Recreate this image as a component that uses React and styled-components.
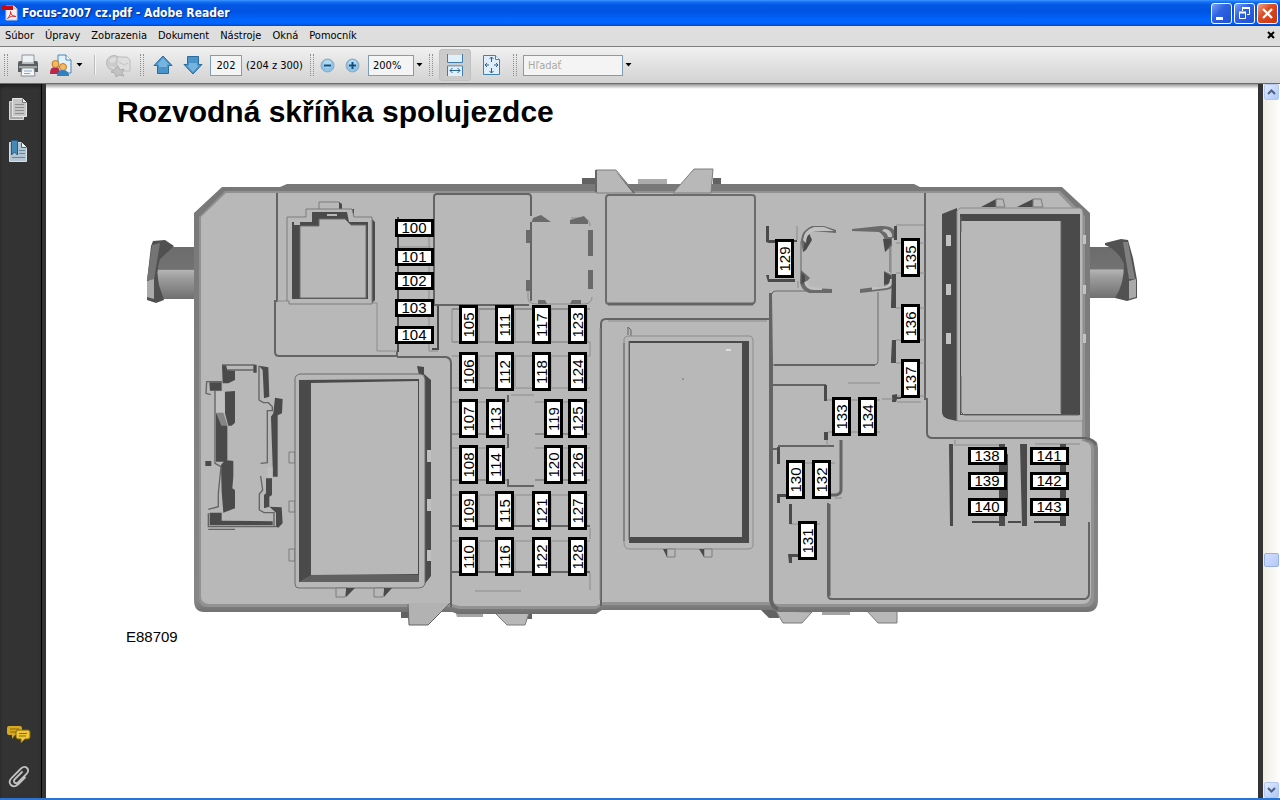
import { useState } from "react";
import styled, { createGlobalStyle, css } from "styled-components";

const menu = ["Súbor", "Úpravy", "Zobrazenia", "Dokument", "Nástroje", "Okná", "Pomocník"];

// x, y of the top left corner of each fuse on the board
const horizontalFuses = [
    [100, 395, 219], [101, 395, 248], [102, 395, 272], [103, 395, 299], [104, 395, 326],
    [138, 968, 447], [139, 968, 472], [140, 968, 498],
    [141, 1030, 447], [142, 1030, 472], [143, 1030, 498],
];

const verticalFuses = [
    [105, 459, 305], [106, 459, 352], [107, 459, 399], [108, 459, 445], [109, 459, 491], [110, 459, 537],
    [111, 495, 305], [112, 495, 352], [113, 486, 399], [114, 486, 445], [115, 495, 491], [116, 495, 537],
    [117, 532, 305], [118, 532, 352], [119, 544, 399], [120, 544, 445], [121, 532, 491], [122, 532, 537],
    [123, 568, 305], [124, 568, 352], [125, 568, 399], [126, 568, 445], [127, 568, 491], [128, 568, 537],
    [129, 775, 239], [130, 786, 460], [131, 798, 521], [132, 812, 460], [133, 832, 397], [134, 858, 397],
    [135, 901, 238], [136, 901, 304], [137, 901, 359],
];

export default function App() {
    const [page, setPage] = useState("202");
    const [search, setSearch] = useState("");

    return (
        <>
            <GlobalStyle />
            <Window>
                <TitleBar>
                    <AppIcon />
                    <Title>Focus-2007 cz.pdf - Adobe Reader</Title>
                    <WindowButton aria-label="Minimalizovať">
                        <svg width="19" height="19"><path d="M4 13h7v3H4z" fill="#fff" /></svg>
                    </WindowButton>
                    <WindowButton aria-label="Obnoviť">
                        <svg width="19" height="19" fill="none" stroke="#fff">
                            <path d="M7.5 7V4.5h7v6H12" /><path d="M7 4h8" strokeWidth="2" />
                            <path d="M4.5 8.5h6v6h-6z" /><path d="M4 8.5h7" strokeWidth="2" />
                        </svg>
                    </WindowButton>
                    <WindowButton $close aria-label="Zavrieť">
                        <svg width="19" height="19"><path d="M5 5l9 9M14 5l-9 9" stroke="#fff" strokeWidth="2.3" /></svg>
                    </WindowButton>
                </TitleBar>
                <MenuBar>
                    {menu.map((item) => <MenuItem key={item}>{item}</MenuItem>)}
                    <CloseDocument aria-label="Zavrieť dokument">
                        <svg width="8" height="8"><path d="M1 1l6 6M7 1L1 7" stroke="#000" strokeWidth="2" /></svg>
                    </CloseDocument>
                </MenuBar>
                <ToolBar>
                    <Grip />
                    <ToolButton $width={28} aria-label="Tlačiť"><PrintIcon /></ToolButton>
                    <ToolButton $width={40} aria-label="Spolupracovať"><ShareIcon /><Caret /></ToolButton>
                    <Divider />
                    <ToolButton $width={32} aria-label="Odoslať" disabled><SendIcon /></ToolButton>
                    <Grip />
                    <ToolButton $width={26} aria-label="Predchádzajúca strana"><ArrowIcon /></ToolButton>
                    <ToolButton $width={26} aria-label="Nasledujúca strana"><ArrowIcon down /></ToolButton>
                    <Field $width={32} $center aria-label="Strana" value={page} onChange={(e) => setPage(e.target.value)} />
                    <PageCount>(204 z 300)</PageCount>
                    <Grip />
                    <ZoomButtons>
                        <ToolButton $width={15} aria-label="Zmenšiť"><ZoomIcon /></ToolButton>
                        <ToolButton $width={15} aria-label="Zväčšiť"><ZoomIcon plus /></ToolButton>
                    </ZoomButtons>
                    <Combo>
                        <ZoomSelect aria-label="Zväčšenie" defaultValue="200%">
                            <option>100%</option>
                            <option>200%</option>
                        </ZoomSelect>
                        <Caret />
                    </Combo>
                    <Grip />
                    <ToolButton $width={32} $active aria-label="Na šírku"><FitWidthIcon /></ToolButton>
                    <ToolButton $width={32} aria-label="Celá strana"><FitPageIcon /></ToolButton>
                    <Grip />
                    <Combo>
                        <Field $width={100} aria-label="Hľadať" placeholder="Hľadať" value={search} onChange={(e) => setSearch(e.target.value)} />
                        <ToolButton $width={7} aria-label="Možnosti hľadania"><Caret /></ToolButton>
                    </Combo>
                </ToolBar>
                <Workspace>
                    <SideBar>
                        <SideButton aria-label="Strany"><PagesIcon /></SideButton>
                        <SideButton aria-label="Záložky"><BookmarkIcon /></SideButton>
                        <Spacer $grow={1} />
                        <SideButton aria-label="Komentáre"><CommentsIcon /></SideButton>
                        <SideButton aria-label="Prílohy"><ClipIcon /></SideButton>
                    </SideBar>
                    <Sheet>
                        <Heading>Rozvodná skříňka spolujezdce</Heading>
                        <Figure>
                            <FuseBox />
                            <Caption>E88709</Caption>
                        </Figure>
                    </Sheet>
                    <ScrollBar>
                        <ScrollButton aria-label="Hore">
                            <svg width="9" height="6"><path d="M1 5l3.5-3.5L8 5" stroke="#4d6185" strokeWidth="2" fill="none" /></svg>
                        </ScrollButton>
                        <Spacer $grow={455} />
                        <Thumb />
                        <Spacer $grow={216} />
                        <ScrollButton aria-label="Dole">
                            <svg width="9" height="6"><path d="M1 1l3.5 3.5L8 1" stroke="#4d6185" strokeWidth="2" fill="none" /></svg>
                        </ScrollButton>
                    </ScrollBar>
                </Workspace>
            </Window>
        </>
    );
}

function FuseBox() {
    return (
        <Board viewBox="146 168 992 460" role="img" aria-label="Rozvodná skříňka">
            <defs>
                <linearGradient id="neck" x1="0" y1="0" x2="0" y2="1">
                    <stop offset="0" stopColor="#6c6c6c" />
                    <stop offset="0.43" stopColor="#727272" />
                    <stop offset="0.45" stopColor="#b4b4b4" />
                    <stop offset="0.6" stopColor="#9c9c9c" />
                    <stop offset="1" stopColor="#707070" />
                </linearGradient>
                <linearGradient id="rim" x1="0" y1="0" x2="0" y2="1">
                    <stop offset="0" stopColor="#787878" />
                    <stop offset="0.97" stopColor="#868686" />
                    <stop offset="1" stopColor="#6e6e6e" />
                </linearGradient>
            </defs>

            {/* mounting ears */}
            <path d="M158 247h37v52h-37z" fill="url(#neck)" />
            <path d="M153 241L165 240L174 246L160 259Q156 270 159 285L164 300L156 303L147 300V281L151 246Z" fill="#505050" />
            <path d="M152 245L160 243L154 280H147Z" fill="#747474" />
            <path d="M147 281L154 279V299L147 297Z" fill="#aaa" />
            <path d="M1088 247h37v51h-37z" fill="url(#neck)" />
            <path d="M1105 243L1121 239L1128 240L1133 258L1137 280V298L1127 301L1115 298Q1124 285 1124 264Q1118 250 1105 245Z" fill="#525252" />
            <path d="M1123 242L1128 242L1135 279H1129Z" fill="#808080" />
            <path d="M1129 281L1136 279V297L1129 299Z" fill="#aaa" />

            {/* case */}
            <path d="M582 178h13v8h-13zM713 178h8v8h-8z" fill="#626262" />
            <path d="M638 179h29v6h-29z" fill="#acacac" />
            <path d="M401 610h10v8h-10zM524 610h8v9h-6zM761 610h18v8h-10z" fill="#636363" />
            <path d="M455 611h28v6h-26zM822 610h28v5h-28z" fill="#a4a4a4" />
            <Tab d="M495 613L507 625H525L529 613Z" />
            <Tab d="M776 611L783 623H802L812 612Z" />
            <Tab d="M867 611L878 623H897V611Z" />
            <path d="M194 213L222 187H280L287 184H914L920 187H1062L1090 213V438Q1098 440 1098 448V600Q1098 612 1087 612H779L771 610H602L596 614H458L452 612H204Q194 612 194 600Z" fill="url(#rim)" />
            <path d="M199 217L225 191H1060L1085 216V441Q1094 442 1094 449V598Q1094 607 1085 607H776L768 605H603L596 609H459L452 607H207Q199 607 199 598Z" fill="#929292" />
            <path d="M201 217L226 193H1058L1082 218V441Q1091 442 1091 449V594Q1091 604 1082 604H776L768 602H603L596 606H459L452 604H210Q201 604 201 596Z" fill="#b8b8b8" />
            <path d="M408 603H450L428 625H409Z" fill="#b2b2b2" />
            <Edge d="M408 604L409 625H428L450 603" />
            <Tab d="M596 193V170H616L635 193Z" />
            <Tab d="M673 193L694 169H713L711 193Z" />
            <path d="M618 174L635 193H633L616 172ZM595 170h2v22h-2z" fill="#666" />

            {/* upper left */}
            <Edge d="M277 193V301H275V352Q275 356 279 356H397V351" $width={2} />
            <Edge d="M397 357H446Q451 358 451 363V607" $width={2} />
            <Edge d="M277 301H287M372 303H377V351H397" $light />
            <Tab d="M319 208V202H339L341 207V210H319Z" />
            <Dark d="M339 202L342 204V209H339ZM352 209H354V217H352ZM371 218L375 222V300L371 304Z" />
            <Tab d="M287 217H306V209H352L354 217H372V304H289V301H287Z" />
            <Dark d="M292 222H312V212H347L349 222H368V299H292Z" />
            <Plate d="M300 226H319V219H345L351 225H366V298H300Z" />
            <path d="M327 214h10v2h-10zM294 222h6v3h-6z" fill="#b8b8b8" />
            <Dark d="M397 217h2v135h-2zM437 306h2v44h-7v-2h5z" />
            <Edge d="M429 237V351H438M399 247H431M399 262H431M399 315H431" $light />

            <Edge d="M434 304V197Q434 194 437 194H528Q531 194 531 197V216" $width={2} />
            <Edge d="M433 305H529" $width={2} />
            <Edge d="M531 222V301" $width={2} />
            <Edge d="M532 222Q532 218 538 219H544M571 218H583Q590 219 590 226M528 291V298Q528 304 537 304H585Q592 303 592 297" $light />
            <Grey d="M533 218L541 215L551 222H532ZM570 220L584 216L588 221V224H570ZM526 230h5v13h-5zM526 280h5v11h-5zM588 230h5v26h-5zM588 270h5v19h-5zM538 300h7l2 4h-9zM572 300h9v4h-11z" />
            <Plate d="M606 198Q606 195 609 195H752Q755 195 755 198V300Q755 304 751 304H609Q606 304 606 301Z" $width={2} />
            <Edge d="M608 304H753" $width={3} />

            {/* fuse columns */}
            {[309, 342, 356, 388].map((y) => <Edge key={y} d={`M452 ${y}H590`} $light={y !== 309} />)}
            {[402, 434, 448, 480].map((y) => <Edge key={y} d={`M452 ${y}H507M535 ${y}H590`} $light={y === 402 || y === 448} />)}
            {[495, 526, 541, 572].map((y) => <Edge key={y} d={`M452 ${y}H590`} $light={y === 495 || y === 541} $width={y === 526 || y === 572 ? 2 : 1} />)}
            {[479, 515, 551, 587].map((x) => (
                <Edge key={x} d={`M${x} 310V341M${x} 357V387M${x} 496V525M${x} 542V571`} $light />
            ))}
            <path d="M508 395h27v91h-27z" fill="#b8b8b8" />
            <Edge d="M508 395V402M508 434V448M508 479V486H534" $width={2} />
            <Edge d="M511 395H534M452 309V342H590V356M590 528V539M590 573V590M475 591H521" $light />

            {/* middle relay */}
            <Edge d="M601 606V324Q601 319 606 319H770" $width={2} />
            <Edge d="M600 328V600M608 321H767" $light />
            <Edge d="M771 293V600Q772 607 778 609" $width={4} />
            <Edge d="M628 335V327L631 330V336" />
            <Plate d="M624 340Q624 336 629 336H749Q753 336 753 341V545Q753 549 748 549H630Q624 549 624 543Z" $light />
            <Dark d="M629 341H749V543H629Z" />
            <path d="M630 343h112v194h-112z" fill="#b8b8b8" />
            <Edge d="M624 343V541M629 341V540" />
            <path d="M726 349h5v2h-5z" fill="#ddd" />
            <circle cx="683" cy="379" r="1" fill="#888" />
            <Tab d="M667 549V557H675V549ZM704 549V557H712V549Z" />
            <Dark d="M663 549H667V557ZM699 549H704V557Z" />

            {/* socket by 129 */}
            <Dark d="M766 226h3v14h12v3h-12l-3-1zM766 275h3v4h26v3h-27zM790 240h7v2h-7z" />
            <Edge d="M797 226V240M798 281V288" $light />
            <Plate d="M772 294Q772 291 776 291H878V361Q878 365 874 365H773" />
            <Edge d="M774 365H875" $width={2} />
            <path d="M801 240V285Q803 292 810 292H882Q893 291 894 285V238Q893 226 881 226H811Q801 227 801 236Z" fill="#b8b8b8" />
            <Grey d="M801 240Q802 230 812 226L824 226L836 230V233L812 231Q806 236 808 246L803 252ZM852 231V229L880 226Q894 225 895 233V238H892V246L885 252V241Q884 235 879 232ZM801 270L810 278L806 282L812 288L832 289V293H809Q801 290 800 282ZM884 271L892 275H895V282Q894 289 886 290L860 293V289L884 286Z" />
            <Dark d="M809 233L812 240L806 250L803 252L805 240ZM883 239H891V244L885 252ZM884 272L891 276V284H884ZM801 272L805 276V283L801 284Z" />
            <path d="M803 240Q804 230 814 227H824L834 231H814Q806 234 806 243ZM884 229Q892 229 892 237H888Q887 232 882 231ZM890 279H894Q893 287 887 288L872 290V287L884 286Q890 285 890 279ZM804 282Q806 290 814 290H822V288L812 287Q808 285 808 281Z" fill="#c1c1c1" />
            <Edge d="M801 241V284M890 247V272" />

            {/* right column */}
            <Edge d="M925 193V399H927V433Q927 438 933 438H1085Q1093 439 1096 445" $width={2} />
            <Edge d="M896 225H924M896 243H925M891 247V275M896 273H925M896 308H925M896 340H925M896 363H925M897 396H925M897 402H921M848 383H880" $light />
            <Dark d="M894 226h3v14h-3zM892 274h4v34h-5v-3zM892 340h4v23h-5v-3zM892 395l5-1v3h4v2h-4l-1 3h-4z" />
            <Dark d="M942 214L957 208V421L948 419Q942 417 942 412Z" />
            <Plate d="M957 211L960 208H1080Q1083 209 1083 213V421H957Z" $light />
            <Dark d="M960 214H1080V415H960Z" />
            <path d="M961 221h100v193h-100z" fill="#b8b8b8" />
            <Edge d="M961 217V232M961 376V412L964 415H1079M1061 221V413" />
            <Dark d="M981 207L996 199V207ZM1017 207L1033 199V207Z" />
            <Tab d="M996 199H1003L1005 207H996ZM1033 199H1041L1043 207H1033Z" />
            <path d="M946 235h5v11h-5zM946 284h5v11h-5zM946 333h5v11h-5zM1083 235h3v9h-3zM1083 285h3v9h-3zM1083 334h3v9h-3z" fill="#c2c2c2" />

            {/* lower right */}
            <Edge d="M772 385H825V400M772 449H777M778 446H834" $width={2} />
            <Edge d="M827 400H880M828 432H880M882 399H893M827 437V446M787 463H835M835 498H842M790 524H820" $light />
            <Dark d="M824 385h3v16h-3zM824 432h4v8h-4zM777 447h3v17h-3zM777 494h9v3h-6v6h-3zM789 504h3v20h-3zM788 554h10v3h-6v6h-3z" />
            <Edge d="M841 440V490Q841 494 836 495H830" $width={3} />
            <Edge d="M828 503V595Q828 599 832 599H1085Q1089 598 1089 593V522" $width={2} />
            <Edge d="M829 504V596" $width={3} />
            <Edge d="M954 445H1003M1035 444H1080M955 440V444M972 522H1005M1035 522H1062" $light />
            <Dark d="M949 444h4v82h-3zM999 444h6v10h3v58h-3v14h-6zM1020 444h7v82h-5zM1060 444h6v82h-6zM972 521h28v2h-28zM1008 521h13v2h-13zM1034 521h27v2h-27z" />

            {/* lower left relay */}
            <Tab d="M289 452h6v11h-6zM289 501h6v11h-6zM289 549h6v12h-6z" />
            <Dark d="M417 366L424 367V375H419ZM424 374L431 380V576L424 585Z" />
            <path d="M427 450h4v12h-4zM427 499h4v12h-4zM427 550h4v11h-4z" fill="#c0c0c0" />
            <Plate d="M295 379Q295 375 300 374H420Q425 375 425 380V584Q424 588 419 588H299Q295 588 295 584Z" />
            <Dark d="M299 380L419 379V582H299Z" />
            <path d="M299 582L311 575H419V582Z" fill="#606060" />
            <path d="M311 383L418 381V574L311 575Z" fill="#b8b8b8" />
            <Tab d="M336 588V597H345L347 588ZM374 588V597H383L385 588Z" />
            <Dark d="M346 588H355L346 597ZM384 588H392L384 597Z" />

            {/* left slot */}
            <g transform="translate(140 350) scale(0.3333)">
                <Dark d="M246 45H258L262 60L285 62V90L265 100H248ZM208 97L245 97V122H210ZM255 125L285 123V218L275 227H265L255 190ZM228 188L262 228V335H228ZM256 330L280 333V380L277 415L285 420V475L250 488L245 425L243 345ZM209 488H245V512L398 514V526H209ZM196 333h18v15h-18z" />
                <Dark d="M357 47L385 52L388 140L372 145L368 60ZM405 143L428 147L426 190L413 196V380H398V345L393 200L400 190ZM378 385H396V435L388 440V470L372 475V435L378 430ZM388 470L425 472L428 520L415 533L408 530V488ZM340 44h10v24h-10z" />
                <path d="M228 125H250Q256 160 255 188H228ZM382 352h16v30h-16z" fill="#c0c0c0" />
                <path d="M228 188H250L263 227H244Z" fill="#858585" />
                <Edge d="M246 45H345M262 60H340M246 95H200L198 130L212 134M225 122V340L243 350L235 430V470L205 478M205 490V530H408M205 538H285M357 47V150L370 158H385L397 170V182H382V338L362 340M362 378L368 420L358 432V480L372 488H402V530" $width={4} />
            </g>

            {horizontalFuses.map(([number, x, y]) => (
                <g key={number}>
                    <FuseRect x={x + 1.5} y={y + 1.5} width="36" height="15" />
                    <FuseText x={x + 19} y={y + 14}>{number}</FuseText>
                </g>
            ))}
            {verticalFuses.map(([number, x, y]) => (
                <g key={number}>
                    <FuseRect x={x + 1.5} y={y + 1.5} width="16" height="36" />
                    <FuseText transform={`translate(${x + 15} ${y + 20}) rotate(-90)`}>{number}</FuseText>
                </g>
            ))}
        </Board>
    );
}

function AppIcon() {
    return (
        <svg width="16" height="16" viewBox="0 0 16 16">
            <path d="M4 1h8l3 3v11H4z" fill="#f6f2f2" stroke="#c9c4cc" />
            <path d="M12 1v3h3" fill="#ddd" stroke="#aaa" strokeWidth=".7" />
            <path d="M0 1h11v4H0z" fill="#c50a12" />
            <path d="M5.5 13.5C8 11 9 8 8.5 6.5C9 10 11 11.5 14 11.5C11 10.5 8 11.5 5.5 13.5Z" fill="none" stroke="#d8262c" />
        </svg>
    );
}

function Caret() {
    return <svg width="7" height="4"><path d="M0.5 0h6l-3 3.5z" fill="#000" /></svg>;
}

function PrintIcon() {
    return (
        <svg width="22" height="23" viewBox="0 0 22 23">
            <path d="M5 1h12v8H5z" fill="#eef1f3" stroke="#8f959a" />
            <path d="M1 9Q1 7 3 7h2v3h12V7h2q2 0 2 2v9H1z" fill="#5b5f63" />
            <path d="M2 12h18v2H2z" fill="#a5a9ac" />
            <path d="M5 14h12l1 8H4z" fill="#f4f6f7" stroke="#888e93" />
            <path d="M7 17h8M7 19.5h6" stroke="#86a9c0" />
        </svg>
    );
}

function ShareIcon() {
    return (
        <svg width="22" height="23" viewBox="0 0 22 23">
            <path d="M8 1h8l5 5v13H8z" fill="#e2f0fb" stroke="#4b86ba" />
            <path d="M16 1v5h5" fill="#fff" stroke="#4b86ba" />
            <path d="M0 19q0-6 5-6t5 6v1H0z" fill="#b9284a" />
            <circle cx="5.5" cy="10" r="3.5" fill="#f4b861" stroke="#bb7a27" />
            <circle cx="13" cy="13" r="3.5" fill="#f4b861" stroke="#bb7a27" />
            <path d="M7 21q1-5 6-5t6 5v1H7z" fill="#2f80bd" />
        </svg>
    );
}

function SendIcon() {
    return (
        <svg width="26" height="23" viewBox="0 0 26 23">
            <circle cx="9" cy="9" r="7.5" fill="#ccc" stroke="#b9b9b9" />
            <path d="M4 6q4-4 8-2l-2 4-4 1zM4 12l5 1 1 3" fill="#ddd" />
            <path d="M12 3h10l3 3v11H12z" fill="#dedede" stroke="#bcbcbc" />
            <path d="M14 8l5 3 4-2" fill="none" stroke="#c2c2c2" />
            <path d="M13 12l2 4 4-1-2 4 2 3-5-1-3 2-1-4-4-1 4-3z" fill="#c3c3c3" stroke="#aeaeae" />
        </svg>
    );
}

function ArrowIcon({ down }) {
    return (
        <svg width="20" height="20" viewBox="0 0 20 20">
            <g transform={down ? "rotate(180 10 10)" : undefined}>
                <path d="M10 1L19 10.5H15.5V18.5H4.5V10.5H1Z" fill="#4a94cb" stroke="#2d6b9c" strokeLinejoin="round" />
                <path d="M10 3L16 9.5H14V12H6V9.5H4Z" fill="#74b4df" />
            </g>
        </svg>
    );
}

function ZoomIcon({ plus }) {
    return (
        <svg width="15" height="15" viewBox="0 0 15 15">
            <circle cx="7.5" cy="7.5" r="6.5" fill="#8ec3e8" stroke="#93a7b6" />
            <circle cx="7.5" cy="6" r="4" fill="#b0d9f3" />
            <path d={plus ? "M4 7.5h7M7.5 4v7" : "M4 7.5h7"} stroke="#14507f" strokeWidth="2" />
        </svg>
    );
}

function FitWidthIcon() {
    return (
        <svg width="16" height="22" viewBox="0 0 16 22">
            <path d="M.5 1h15v7.5H.5z" fill="#e1effa" />
            <path d="M.5 0v8.5h15V0M.5 22V12h15v10" fill="none" stroke="#3f7cab" />
            <path d="M1 12.5h14V22H1z" fill="#e1effa" />
            <path d="M3 16.5h10M5.5 14L3 16.5L5.5 19M10.5 14L13 16.5L10.5 19" fill="none" stroke="#2a6292" />
        </svg>
    );
}

function FitPageIcon() {
    return (
        <svg width="17" height="22" viewBox="0 0 17 22">
            <path d="M.5 1.500h12l4 4v15H.5z" fill="#dfeefa" stroke="#4280ae" />
            <path d="M12.5 1.500v4h4" fill="#fff" stroke="#4280ae" />
            <path d="M8.5 3v5M6.5 5l2-2 2 2M8.5 14v5M6.5 17l2 2 2-2M2 11h4M4 9l-2 2 2 2M11 11h4M13 9l2 2-2 2" fill="none" stroke="#2a6292" />
        </svg>
    );
}

function PagesIcon() {
    return (
        <svg width="20" height="22" viewBox="0 0 20 22">
            <path d="M.5 3.5h10l4 4v14H.5z" fill="#a9a9a9" stroke="#dadada" />
            <path d="M3.5 .5h10l4 4v14h-14z" fill="#c6c6c6" stroke="#e6e6e6" />
            <path d="M13.5 .5v4h4" fill="#eee" stroke="#777" />
            <path d="M6 6.5h9M6 9.5h9M6 12.5h9M6 15.5h9" stroke="#8d8d8d" />
        </svg>
    );
}

function BookmarkIcon() {
    return (
        <svg width="20" height="22" viewBox="0 0 20 22">
            <path d="M.5 2.500h12l5 5v14H.5z" fill="#b3c5d2" stroke="#d5e0e7" />
            <path d="M12.5 2.500v5h5" fill="#e9f0f5" stroke="#47657a" />
            <path d="M10 10.5h6M10 13.5h6M3 17.5h13" stroke="#698596" />
            <path d="M2.5 .5h6V15l-3-3-3 3z" fill="#4689b4" stroke="#285b80" />
        </svg>
    );
}

function CommentsIcon() {
    return (
        <svg width="24" height="20" viewBox="0 0 24 20">
            <path d="M2 1h11q2 0 2 2v5q0 2-2 2H8l-3 4v-4H3Q0 10 0 8V3q0-2 2-2z" fill="#d8a91f" />
            <path d="M3 4h9M3 7h6" stroke="#8b6a0e" />
            <path d="M11 5h10q2 0 2 2v5q0 2-2 2h-3l-4 4v-4h-3q-2 0-2-2V7q0-2 2-2z" fill="#f0c736" stroke="#80640f" />
            <path d="M12 8.5h8M12 11h7" stroke="#8b6a0e" />
        </svg>
    );
}

function ClipIcon() {
    return (
        <svg width="22" height="23" viewBox="0 0 22 23">
            <path
                d="M14 7L7 14q-2 2-.5 3.5t3.5 0L18.5 9q3-3.5 .5-6t-6 .5L3.5 13q-3.5 4-.5 7t7-.5l7-7"
                fill="none" stroke="#c1c1c1" strokeWidth="1.8" strokeLinecap="round"
            />
        </svg>
    );
}

const uiFont = css`
    font-family: "DejaVu Sans Condensed", "DejaVu Sans", sans-serif;
    font-size: 11px;
`;

const GlobalStyle = createGlobalStyle`
    * {
        box-sizing: border-box;
    }
    body {
        margin: 0;
        font-family: "Liberation Sans", Arial, sans-serif;
        color: #000;
    }
    button {
        padding: 0;
        border: none;
        background: none;
        color: inherit;
    }
    svg {
        display: block;
        flex: none;
    }
`;

const Window = styled.div`
    display: flex;
    flex-direction: column;
    height: 100vh;
    border-bottom: 2px solid #2c74cf;
`;

const TitleBar = styled.header`
    display: flex;
    align-items: center;
    gap: 2px;
    flex: none;
    height: 26px;
    padding: 0 2px;
    background: linear-gradient(#3c96ff 0, #1470f5 2px, #0357e2 5px, #0054e3 12px, #0064fc 19px, #0066ff 23px, #0047c6 26px);
`;

const Title = styled.h1`
    flex: 1;
    margin: 0 0 0 2px;
    color: #fff;
    font-family: "DejaVu Sans Condensed", "DejaVu Sans", sans-serif;
    font-size: 12px;
    font-weight: bold;
    text-shadow: 1px 1px 1px #0a2a85;
`;

const WindowButton = styled.button`
    width: 21px;
    height: 21px;
    border: 1px solid #fff;
    border-radius: 3px;
    background: ${(props) => props.$close
        ? "linear-gradient(135deg, #f0a088, #dc4c25 40%, #c9340f)"
        : "linear-gradient(135deg, #7ba2f4, #2f63e2 40%, #1f50d2)"};
`;

const MenuBar = styled.nav`
    display: flex;
    align-items: center;
    flex: none;
    height: 20px;
    padding: 0 5px 2px;
    gap: 11px;
    background: #dedede;
`;

const MenuItem = styled.button`
    ${uiFont}
`;

const CloseDocument = styled.button`
    margin-left: auto;
`;

const ToolBar = styled.div`
    display: flex;
    align-items: center;
    gap: 4px;
    flex: none;
    height: 38px;
    padding: 0 2px;
    border-top: 1px solid #7e7e7e;
    border-bottom: 1px solid #6b6b6b;
    background: linear-gradient(#f1f1f1, #d2d2d2);
    ${uiFont}
`;

const Grip = styled.span`
    flex: none;
    width: 4px;
    height: 22px;
    margin: 0 2px;
    border: dotted #8e8e8e;
    border-width: 0 1px;
`;

const Divider = styled.span`
    width: 8px;
    height: 20px;
    background: linear-gradient(90deg, transparent 4px, #bcbcbc 4px, #bcbcbc 5px, #f6f6f6 5px, #f6f6f6 6px, transparent 6px);
`;

const ToolButton = styled.button`
    display: flex;
    align-items: center;
    justify-content: center;
    gap: 4px;
    flex: none;
    width: ${(props) => props.$width}px;
    height: 32px;
    border-radius: 3px;
    ${(props) => props.$active && css`
        border: 1px solid #c0c0c0;
        background: #cbcbcb;
    `}
`;

const fieldStyle = css`
    height: 21px;
    border: 1px solid #7f9db9;
    border-radius: 0;
    outline: none;
    background: #f4f4f4;
    color: #000;
    ${uiFont}
`;

const Field = styled.input`
    ${fieldStyle}
    width: ${(props) => props.$width}px;
    padding: 0 4px;
    text-align: ${(props) => props.$center ? "center" : "left"};
    &::placeholder {
        color: #a9a99d;
        opacity: 1;
    }
`;

const ZoomSelect = styled.select`
    ${fieldStyle}
    width: 46px;
    padding: 0 4px;
    appearance: none;
`;

const PageCount = styled.span`
    flex: none;
    min-width: 58px;
    white-space: nowrap;
`;

const ZoomButtons = styled.div`
    display: flex;
    gap: 10px;
    padding-right: 4px;
`;

const Combo = styled.div`
    display: flex;
    align-items: center;
    gap: 2px;
`;

const Workspace = styled.main`
    display: flex;
    flex: 1;
    min-height: 0;
    background: #333;
`;

const SideBar = styled.aside`
    display: flex;
    flex-direction: column;
    flex: none;
    gap: 20px;
    width: 42px;
    margin-right: 4px;
    padding: 14px 0 10px;
    border-right: 1px solid #000;
    box-shadow: inset 0 3px 3px #222;
`;

const SideButton = styled.button`
    display: flex;
    justify-content: center;
    padding-right: 3px;
`;

const Spacer = styled.div`
    flex: ${(props) => props.$grow} 1 0;
`;

const Sheet = styled.article`
    flex: 1;
    min-width: 0;
    padding: 11px 71px 0;
    overflow: hidden;
    background: linear-gradient(#949494, #fff 5px);
`;

const Heading = styled.h2`
    margin: 0 0 39px;
    font-size: 30px;
    line-height: 34px;
`;

const Figure = styled.figure`
    margin: 0 9px;
`;

const Caption = styled.figcaption`
    font-size: 15px;
    line-height: 18px;
`;

const Board = styled.svg`
    width: 992px;
    max-width: 100%;
    margin-left: 20px;
`;

const Edge = styled.path`
    fill: none;
    stroke: ${(props) => props.$light ? "#8c8c8c" : "#646464"};
    stroke-width: ${(props) => props.$width || 1};
`;

const Plate = styled.path`
    fill: #b8b8b8;
    stroke: ${(props) => props.$light ? "#8c8c8c" : "#6c6c6c"};
    stroke-width: ${(props) => props.$width || 1};
`;

const Tab = styled.path`
    fill: #b8b8b8;
    stroke: #7c7c7c;
`;

const Dark = styled.path`
    fill: #4a4a4a;
`;

const Grey = styled.path`
    fill: #6a6a6a;
`;

const FuseRect = styled.rect`
    fill: #fff;
    stroke: #000;
    stroke-width: 3;
`;

const FuseText = styled.text`
    font-family: "Liberation Sans", Arial, sans-serif;
    font-size: 15px;
    text-anchor: middle;
`;

const ScrollBar = styled.div`
    display: flex;
    flex-direction: column;
    align-items: center;
    flex: none;
    width: 17px;
    margin-left: 5px;
    background: linear-gradient(90deg, #eeede5, #fefefb);
`;

const ScrollButton = styled.button`
    display: flex;
    align-items: center;
    justify-content: center;
    width: 15px;
    height: 16px;
    border: 1px solid #b4c6f5;
    border-radius: 2px;
    background: linear-gradient(135deg, #e1eafe, #aec8f7);
`;

const Thumb = styled.div`
    width: 15px;
    height: 14px;
    border: 1px solid #98b1e4;
    border-radius: 2px;
    background: linear-gradient(135deg, #d2defe, #b6c9f8);
`;
